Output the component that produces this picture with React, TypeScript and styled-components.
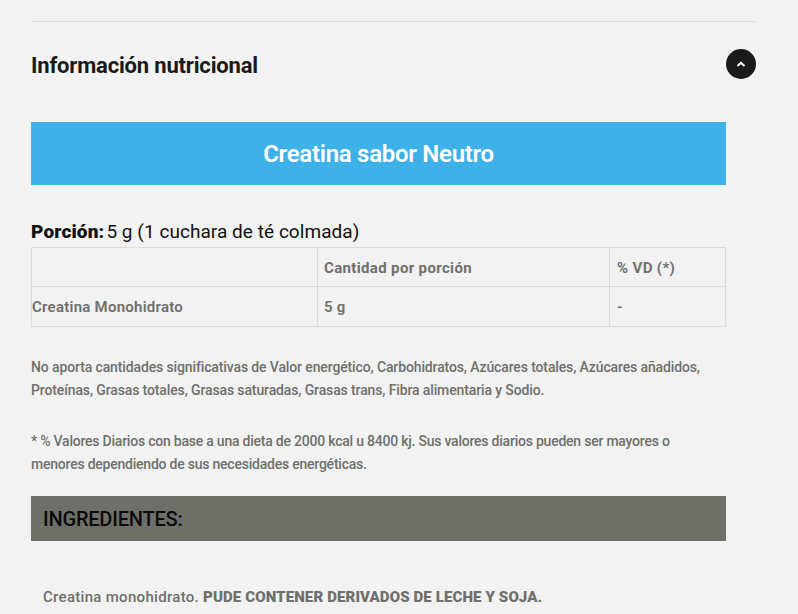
import React from "react";
import styled, { createGlobalStyle } from "styled-components";

const Global = createGlobalStyle`
  html, body { margin: 0; padding: 0; background: #f2f2f2; overflow: hidden; }
  body { font-family: "Roboto", "Liberation Sans", sans-serif; }
`;

const Page = styled.div`
  width: 798px;
  height: 614px;
  padding: 21px 42px 0 31px;
  box-sizing: border-box;
  overflow: hidden;
`;

const Accordion = styled.section`
  border-top: 1px solid #dcdcdc;
`;

const Header = styled.header`
  display: flex;
  align-items: center;
  justify-content: space-between;
  height: 30px;
  margin-top: 27px;
`;

const Title = styled.h2`
  margin: 2px 0 0;
  font-size: 22px;
  font-weight: 700;
  letter-spacing: -0.18px;
  color: #1a1a1a;
`;

const Toggle = styled.button`
  width: 30px;
  height: 30px;
  border: 0;
  padding: 0;
  border-radius: 50%;
  background: #1a1a1a;
  display: flex;
  align-items: center;
  justify-content: center;
`;

const Content = styled.div`
  width: 695px;
  margin-top: 43px;
`;

const Banner = styled.div`
  height: 63px;
  padding-top: 1px;
  box-sizing: border-box;
  background: #3eb1e8;
  color: #fff;
  display: flex;
  align-items: center;
  justify-content: center;
  font-size: 24px;
  font-weight: 600;
  letter-spacing: -0.28px;
`;

const Serving = styled.p`
  margin: 36px 0 0;
  height: 26px;
  line-height: 22px;
  font-size: 19px;
  color: #111;
  letter-spacing: 0.05px;
  b { font-weight: 900; margin-right: 2px; letter-spacing: 0.15px; }
`;

const Table = styled.table`
  width: 694px;
  border-collapse: collapse;
  table-layout: fixed;
  font-size: 15px;
  color: #6f6f6b;
  font-weight: 600;
  letter-spacing: 0.25px;
  td { border: 1px solid #dcdcdc; padding: 0 6px; height: 39px; }
  td:first-child { padding: 0; }
  td:last-child { padding-left: 7px; }
  tr:first-child td { font-weight: 700; letter-spacing: 0.35px; padding-top: 2px; height: 36px; }
`;

const Note = styled.p<{ $spacing: number }>`
  margin: 0;
  font-size: 14px;
  font-weight: 500;
  line-height: 23px;
  letter-spacing: ${(p) => p.$spacing}px;
  color: #6f6f6b;
`;

const Notes = styled.div`
  margin-top: 29px;
  display: flex;
  flex-direction: column;
  gap: 28px;
`;

const SectionBar = styled.div`
  height: 45px;
  margin-top: 20px;
  background: #6f6f69;
  padding-left: 12px;
  display: flex;
  align-items: center;
  font-size: 20px;
  font-weight: 500;
  letter-spacing: -0.2px;
  color: #0a0a0a;
`;

const Ingredients = styled.p`
  margin: 47px 0 0 12px;
  font-size: 15px;
  font-weight: 500;
  letter-spacing: 0.3px;
  color: #6f6f6b;
  b { font-weight: 900; letter-spacing: 0.12px; }
`;

export default function App() {
  return (
    <Page>
      <Global />
      <Accordion>
        <Header>
          <Title>Información nutricional</Title>
          <Toggle aria-label="Contraer">
            <svg width="10" height="6" viewBox="0 0 10 6" fill="none">
              <path d="M1.5 5 L5 1.8 L8.5 5" stroke="#fff" strokeWidth="2" />
            </svg>
          </Toggle>
        </Header>
        <Content>
          <Banner>Creatina sabor Neutro</Banner>
          <Serving><b>Porción:</b>5 g (1 cuchara de té colmada)</Serving>
          <Table>
            <colgroup>
              <col style={{ width: 286 }} />
              <col style={{ width: 292 }} />
              <col style={{ width: 116 }} />
            </colgroup>
            <tbody>
              <tr><td></td><td>Cantidad por porción</td><td>% VD (*)</td></tr>
              <tr><td>Creatina Monohidrato</td><td>5 g</td><td>-</td></tr>
            </tbody>
          </Table>
          <Notes>
            <Note $spacing={-0.125}>No aporta cantidades significativas de Valor energético, Carbohidratos, Azúcares totales, Azúcares añadidos, Proteínas, Grasas totales, Grasas saturadas, Grasas trans, Fibra alimentaria y Sodio.</Note>
            <Note $spacing={-0.225}>* % Valores Diarios con base a una dieta de 2000 kcal u 8400 kj. Sus valores diarios pueden ser mayores o menores dependiendo de sus necesidades energéticas.</Note>
          </Notes>
          <SectionBar>INGREDIENTES:</SectionBar>
          <Ingredients>Creatina monohidrato. <b>PUDE CONTENER DERIVADOS DE LECHE Y SOJA.</b></Ingredients>
        </Content>
      </Accordion>
    </Page>
  );
}
